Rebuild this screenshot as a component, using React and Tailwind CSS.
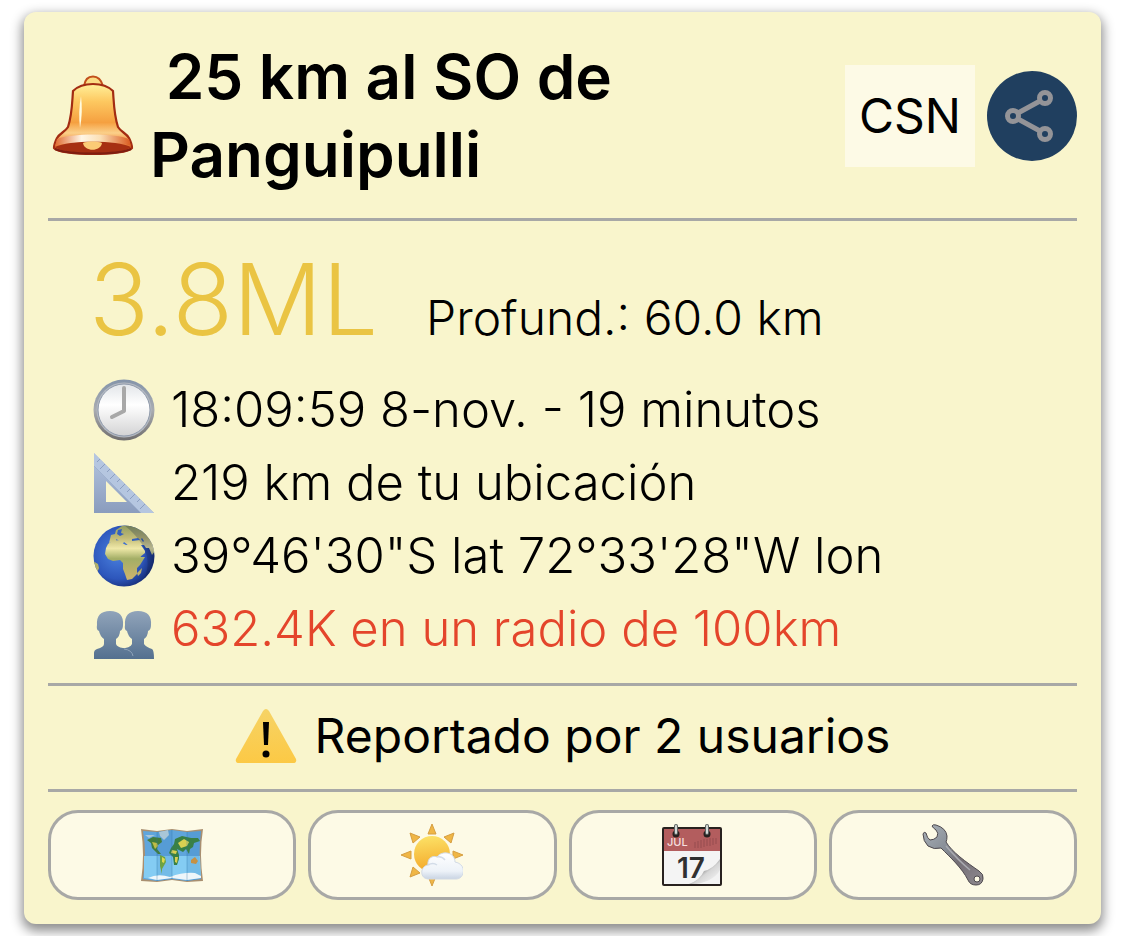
const sismo = {
  lugar: '25 km al SO de Panguipulli',
  fuente: 'CSN',
  magnitud: '3.8ML',
  profundidad: 'Profund.: 60.0 km',
  reportes: 'Reportado por 2 usuarios',
};

function IconoCampana() {
  return (
    <svg viewBox="0 0 82 82" className="w-[82px] h-[82px] shrink-0" aria-hidden="true">
      <defs>
        <linearGradient id="campana" x1="0" y1="0" x2="0" y2="1">
          <stop offset="0" stopColor="#fff09a" />
          <stop offset="0.25" stopColor="#fdc860" />
          <stop offset="0.55" stopColor="#f5a040" />
          <stop offset="0.7" stopColor="#fbd08a" />
          <stop offset="0.8" stopColor="#f3974a" />
          <stop offset="1" stopColor="#d9541a" />
        </linearGradient>
        <linearGradient id="borde" x1="0" x2="1">
          <stop offset="0" stopColor="#e06a30" />
          <stop offset="0.35" stopColor="#fff6e6" />
          <stop offset="0.6" stopColor="#fbdfb4" />
          <stop offset="1" stopColor="#d9581d" />
        </linearGradient>
      </defs>
      <path d="M32 11C33 4 37 1.500 41 1.500S49 4 51 11Z" fill="#fbdc84" stroke="#c2501c" strokeWidth="2" />
      <path d="M21 16C26 11 33 9 41 9s15 2 20 7c1 14 1 24 5 36 3 5 8 6 11 11 2 4 3 7 3 10-6 8-72 8-78 0 0-3 1-6 3-10 3-5 8-6 11-11 4-12 4-22 5-36Z" fill="url(#campana)" stroke="#a32c12" strokeWidth="2.200" />
      <path d="M5 64c14-6 58-6 72 0l2 7C62 66 20 66 3 71Z" fill="url(#borde)" />
      <path d="M3 72c14-7 62-7 76 0-8 8-68 8-76 0Z" fill="#a62f12" />
      <path d="M31 68c4-2 15-2 19 0-1 9-18 9-19 0Z" fill="#fbcb76" />
      <path d="M29 21q2 16-1 32-2-16 1-32Z" fill="#fffbe0" />
      <path d="M3 74c14 6 62 6 76 0" fill="none" stroke="#7f1d10" strokeWidth="2" />
    </svg>
  );
}

function IconoCompartir() {
  return (
    <svg viewBox="0 0 90 90" className="size-[90px]" fill="none" stroke="#949498" strokeWidth="5" aria-hidden="true">
      <path d="M31 42 53 30M31 48l22 12" />
      <circle cx="26" cy="45" r="5.500" />
      <circle cx="58" cy="27" r="5.500" />
      <circle cx="58" cy="63" r="5.500" />
    </svg>
  );
}

function IconoReloj() {
  return (
    <svg viewBox="0 0 62 62" className="size-[62px]" aria-hidden="true">
      <defs>
        <linearGradient id="aro" x1="0" y1="0" x2="0" y2="1">
          <stop offset="0" stopColor="#8494aa" />
          <stop offset="0.5" stopColor="#a9acb1" />
          <stop offset="1" stopColor="#6f6d6d" />
        </linearGradient>
        <linearGradient id="esfera" x1="0" y1="0" x2="0" y2="1">
          <stop offset="0" stopColor="#e2e5e9" />
          <stop offset="0.4" stopColor="#ffffff" />
          <stop offset="1" stopColor="#d3d3d4" />
        </linearGradient>
      </defs>
      <circle cx="31" cy="31" r="30.500" fill="url(#aro)" />
      <circle cx="31" cy="31" r="27.500" fill="#b5bac2" />
      <circle cx="31" cy="31" r="26" fill="url(#esfera)" stroke="#8f9aab" strokeWidth="1" />
      <path d="M31 9v23L19 38" fill="none" stroke="#a8a8a8" strokeWidth="4" strokeLinecap="round" strokeLinejoin="round" />
    </svg>
  );
}

function IconoEscuadra() {
  return (
    <svg viewBox="0 0 62 62" className="size-[62px]" aria-hidden="true">
      <defs>
        <linearGradient id="escuadra" x1="0" y1="0" x2="0" y2="1">
          <stop offset="0" stopColor="#b4c5e0" />
          <stop offset="1" stopColor="#8a9cbd" />
        </linearGradient>
      </defs>
      <path fillRule="evenodd" d="M1 1 61 61H1ZM13 29v21h21Z" fill="url(#escuadra)" />
      <path d="M1 1 61 61H48L1 14Z" fill="#b5c6e0" />
      <path d="M1 14 48 61" stroke="#9fb1cf" strokeWidth="1" />
      <path d="m7 7-3 3M12 12l-5 5M17 17l-3 3M22 22l-5 5M27 27l-3 3M32 32l-5 5M37 37l-3 3M42 42l-5 5M47 47l-3 3M52 52l-5 5" stroke="#8c9fc1" strokeWidth="1" />
    </svg>
  );
}

function IconoTierra() {
  return (
    <svg viewBox="0 0 62 62" className="size-[62px]" aria-hidden="true">
      <defs>
        <radialGradient id="mar" cx="0.4" cy="0.45" r="0.6">
          <stop offset="0" stopColor="#4c83e0" />
          <stop offset="0.7" stopColor="#2d56bb" />
          <stop offset="1" stopColor="#172d78" />
        </radialGradient>
        <linearGradient id="tierra" gradientUnits="userSpaceOnUse" x1="0" y1="0" x2="0" y2="52">
          <stop offset="0" stopColor="#8f9c60" />
          <stop offset="0.25" stopColor="#c2bb76" />
          <stop offset="0.45" stopColor="#efe8a8" />
          <stop offset="0.65" stopColor="#a3ae66" />
          <stop offset="1" stopColor="#c9b36c" />
        </linearGradient>
        <clipPath id="globo"><circle cx="31" cy="31" r="30.500" /></clipPath>
      </defs>
      <g clipPath="url(#globo)">
        <rect width="62" height="62" fill="url(#mar)" />
        <g fill="url(#tierra)">
          <path d="M15 19l4-3 8-1 2 3 4 2 3-1 5 1 4 8 3 4 4 0-5 8-3 3 0 6-5 5-5 1-2-6-2-5 0-6-3-3-7 1-5-2-3-5 1-6Z" />
          <path d="M17 14l1-4 4-1 1-4 6-4 6-1 8 1 9 6 7 9 3 10-3 4-3-7-3 0-2-3-3 0 4 6 0 2-5 4-4-6-3-5-5-1-4-3-2 3-2-4-4-2 1 5-3-3-5 2Z" />
          <path d="M0 36l5 3 1 4-2 5-4-3ZM49 43l-5 5 1 3 3-3Z" />
        </g>
        <path d="M25 5l4-1-1 4 3 1-4 2-3-2ZM39 14l6-1 2 2-8 1ZM49 13l2 3-1 1-2-3Z" fill="#3460bd" />
        <path d="M31 0a31 31 0 0 1 20 54q13-28-20-54Z" fill="#102048" opacity="0.250" />
      </g>
    </svg>
  );
}

function IconoPersonas() {
  return (
    <svg viewBox="0 0 62 62" className="size-[62px]" aria-hidden="true">
      <defs>
        <linearGradient id="silueta" gradientUnits="userSpaceOnUse" x1="0" y1="12" x2="0" y2="61">
          <stop offset="0" stopColor="#92a5bb" />
          <stop offset="1" stopColor="#54708f" />
        </linearGradient>
      </defs>
      <g fill="url(#silueta)">
        <path d="M26 61V51Q38 50 39 46V41Q35 38 34 33Q31 32 32 27Q31 13 45 13T58 27Q58 32 55 33Q55 38 51 41V46Q53 49 59 51Q61 52 61 61Z" />
        <path d="M1 61V55Q1 52 4 51Q11 49 11 46V41Q7 38 6 33Q3 32 4 27Q3 13 17 13T30 27Q30 32 27 33Q27 38 23 41V46Q24 49 30 50Q39 51 40 61Z" />
      </g>
      <path d="M31 51q8 1 9 7" fill="none" stroke="#8fa3ba" strokeWidth="1" />
    </svg>
  );
}

function IconoAlerta() {
  return (
    <svg viewBox="0 0 62 62" className="size-[62px]" aria-hidden="true">
      <defs>
        <linearGradient id="alerta" x1="0" y1="0" x2="0" y2="1">
          <stop offset="0" stopColor="#f6d365" />
          <stop offset="1" stopColor="#fcc945" />
        </linearGradient>
      </defs>
      <path d="M28 6q3-4 6 0l27 48q1 4-3 4H4q-4 0-3-4Z" fill="url(#alerta)" />
      <path d="M28 17h6l-1 23h-4Z" />
      <circle cx="31" cy="49" r="3.500" />
    </svg>
  );
}

function IconoMapa() {
  return (
    <svg viewBox="0 0 62 62" className="size-[62px]" aria-hidden="true">
      <path d="M0 5l16 2 15-2 15 2 16-2q-4 25 0 52l-16 1-15-2-15 2-16-1Q4 31 0 5Z" fill="#a98f70" />
      <path d="M2 7l14 1 15-2 15 2 14-1q-3 23 0 48l-14 2-15-2-15 2-14-2Q6 30 2 7Z" fill="#5fa5dc" />
      <path d="M3 32h56l1 22-14 2-15-2-15 2-13-2Z" fill="#84ccf3" />
      <path d="M16 8l15-2v49l-15 2ZM46 8l14-1q-3 23 0 48l-14 2Z" fill="#3581bd" opacity="0.220" />
      <path d="M6 16l6-3 8 1 1 4-4 3-1 4 4 5-3 0-6-6-1-5Z" fill="#427d3c" />
      <path d="M11 18l5 1 1 3-3 3Z" fill="#c0bd44" />
      <path d="M4 11l10 0-6 3ZM18 8l9-2 1 5-5 5-4-4Z" fill="#a9c6d8" />
      <path d="M19 31l5 2 1 5-4 7 0 5-2-8Z" fill="#6da243" />
      <path d="M21 33l3 2-1 4-2-1Z" fill="#dfd94c" />
      <path d="M33 20l1-5 7-3 9 2 7 0 2 3-6 2-1 4-3 2-1 5-3-5-3 3-6-3 2 6 0 4-2 6-3 0-1-8-4-4 2-5Z" fill="#398046" />
      <path d="M37 19l6-4 5 3-2 4-6 2ZM31 26l5 1-1 3-5-1ZM34 33l3 0-1 6-2-1Z" fill="#d9d051" />
      <path d="M50 36l4-3 3 4-2 3-5-1Z" fill="#c69144" />
      <path d="M7 54q10-5 22-1 13-5 25-4l6 3v2l-14 2-15-2-15 2Z" fill="#eef6fa" />
      <path d="M16 8v49M31 6v49M46 8v49" stroke="#2f74a8" strokeWidth="1" opacity="0.350" />
    </svg>
  );
}

function IconoClima() {
  return (
    <svg viewBox="0 0 62 62" className="size-[62px]" aria-hidden="true">
      <defs>
        <linearGradient id="sol" x1="0.200" y1="0" x2="0.300" y2="1">
          <stop offset="0" stopColor="#fce267" />
          <stop offset="1" stopColor="#f4a829" />
        </linearGradient>
        <linearGradient id="nube" x1="0" y1="0" x2="0" y2="1">
          <stop offset="0" stopColor="#ffffff" />
          <stop offset="0.7" stopColor="#edf2f8" />
          <stop offset="1" stopColor="#c9d4e3" />
        </linearGradient>
      </defs>
      <path d="M31 0 27 10h8ZM9 9l3 10 7-6ZM53 9l-3 10-7-6ZM0 31l10-4v8ZM62 31l-10-4v8ZM9 53l3-10 7 6ZM31 62l-4-10h8Z" fill="#f0b645" stroke="#d59e42" strokeWidth="1" />
      <circle cx="31" cy="30" r="18" fill="url(#sol)" />
      <path d="M28 55c-10 0-9-13-1-14-1-7 5-10 9-8 5-7 18-5 18 5 12 2 10 17 1 17Z" fill="url(#nube)" stroke="#d2dae5" strokeWidth="1" />
      <path d="M27 41q5-3 9 0m0-8q5-1 8 3" fill="none" stroke="#d3dce8" strokeWidth="1.500" />
    </svg>
  );
}

function IconoCalendario() {
  return (
    <svg viewBox="0 0 62 62" className="size-[62px]" aria-hidden="true">
      <defs>
        <linearGradient id="hoja" x1="0.300" y1="0.300" x2="0.900" y2="0.900">
          <stop offset="0" stopColor="#555555" />
          <stop offset="0.450" stopColor="#d6d6d6" />
          <stop offset="1" stopColor="#f5f5f5" />
        </linearGradient>
      </defs>
      <rect x="0" y="3" width="60" height="59" rx="2" fill="#28211f" />
      <path d="M2 5h56v22H2Z" fill="#b35d5e" />
      <path d="M2 27h56v33H2Z" fill="#f4f4f4" />
      <text x="5" y="22" fontFamily="Inter, sans-serif" fontSize="11" fontWeight="500" fill="#f6dfdf">JUL</text>
      <path d="M33 18v6M36 17v7M39 16v8M42 15v8M45 15v7M48 14v8M51 14v7M54 14v6" stroke="#954d4f" strokeWidth="1" />
      <text x="15" y="54" fontFamily="Inter, sans-serif" fontSize="28" fontWeight="600" fill="#303030">17</text>
      <path d="M27 60q11-4 15-13 9-2 16-12v25Z" fill="url(#hoja)" />
      <path d="M34 60q18-3 24-14v14Z" fill="#f3f3f3" />
      <circle cx="14" cy="10" r="3.500" fill="#28211f" />
      <circle cx="45" cy="10" r="3.500" fill="#28211f" />
      <path d="M14 2v7M45 2v7" stroke="#5d6262" strokeWidth="4" strokeLinecap="round" />
      <path d="M14 2v7M45 2v7" stroke="#d5dad7" strokeWidth="2" strokeLinecap="round" />
    </svg>
  );
}

function IconoLlave() {
  return (
    <svg viewBox="0 0 62 62" className="size-[62px]" aria-hidden="true">
      <defs>
        <linearGradient id="metal" x1="0" y1="0" x2="1" y2="1">
          <stop offset="0" stopColor="#aab1b8" />
          <stop offset="0.400" stopColor="#868c95" />
          <stop offset="0.600" stopColor="#746e75" />
          <stop offset="1" stopColor="#8f8a90" />
        </linearGradient>
      </defs>
      <path
        fillRule="evenodd"
        d="M10 2Q11 0 14 1Q24 4 25 12Q25 16 24 18C30 28 44 38 57 47Q62 50 61 55Q60 61 54 61Q48 61 46 56C40 44 28 33 19 24Q12 26 6 22Q1 17 1 10Q2 7 4 9Q5 14 8 16Q12 16 15 13Q17 9 14 6Q11 4 10 2ZM55 52A3 3 0 1 0 55 58A3 3 0 0 0 55 52Z"
        fill="url(#metal)"
        stroke="#4e494e"
        strokeWidth="1"
      />
      <path d="M24 22q12 14 24 24" fill="none" stroke="#a9aab0" strokeWidth="1.500" />
    </svg>
  );
}

const detalles = [
  { icono: IconoReloj, texto: '18:09:59 8-nov. - 19 minutos', color: 'text-black' },
  { icono: IconoEscuadra, texto: '219 km de tu ubicación', color: 'text-black' },
  { icono: IconoTierra, texto: '39°46\'30"S lat 72°33\'28"W lon', color: 'text-black' },
  { icono: IconoPersonas, texto: '632.4K en un radio de 100km', color: 'text-[#e4452b]' },
];

const acciones = [
  { icono: IconoMapa, nombre: 'Mapa' },
  { icono: IconoClima, nombre: 'Clima' },
  { icono: IconoCalendario, nombre: 'Calendario' },
  { icono: IconoLlave, nombre: 'Ajustes' },
];

function Encabezado() {
  return (
    <header className="flex items-center pt-[26px] pb-6 border-b-3 border-[#a8a8a6]">
      <div className="ml-1 mr-4 shrink-0">
        <IconoCampana />
      </div>
      <h1 className="w-[500px] text-[62px] leading-[78px] font-semibold">&nbsp;{sismo.lugar}</h1>
      <div className="ml-auto flex items-center gap-3 shrink-0">
        <span className="bg-[#fdfae6] px-[14px] py-3 text-[48px] leading-[78px]">{sismo.fuente}</span>
        <button type="button" aria-label="Compartir" className="rounded-full bg-[#203f5f]">
          <IconoCompartir />
        </button>
      </div>
    </header>
  );
}

function Detalles() {
  return (
    <section className="pl-[45px] pb-[18px] border-b-3 border-[#a8a8a6] font-light">
      <div className="-ml-1 flex items-baseline gap-12 pt-[14px] pb-2.5">
        <span className="text-[99px] leading-[128px] text-[#eac443]">{sismo.magnitud}</span>
        <span className="text-[48px]">{sismo.profundidad}</span>
      </div>
      <ul>
        {detalles.map(({ icono: Icono, texto, color }) => (
          <li key={texto} className={`flex items-center gap-4 text-[49px] leading-[73px] ${color}`}>
            <Icono />
            <span>{texto}</span>
          </li>
        ))}
      </ul>
    </section>
  );
}

export default function App() {
  return (
    <main className="bg-white px-6 py-3 font-['Inter',sans-serif] text-black">
      <article className="rounded-xl bg-[#f9f5cc] px-6 pb-6 shadow-[0_5px_12px_2px_rgba(0,0,0,0.45)]">
        <Encabezado />
        <Detalles />
        <div className="flex items-center justify-center gap-[18px] pt-2.5 pb-3.5 border-b-3 border-[#a8a8a6] text-[48px] leading-[79px]">
          <IconoAlerta />
          <span>{sismo.reportes}</span>
        </div>
        <nav className="mt-[18px] grid grid-cols-4 gap-3">
          {acciones.map(({ icono: Icono, nombre }) => (
            <button
              key={nombre}
              type="button"
              aria-label={nombre}
              className="h-[90px] flex items-center justify-center rounded-[30px] border-3 border-[#a8a8a6] bg-[#fdfae6]"
            >
              <Icono />
            </button>
          ))}
        </nav>
      </article>
    </main>
  );
}
